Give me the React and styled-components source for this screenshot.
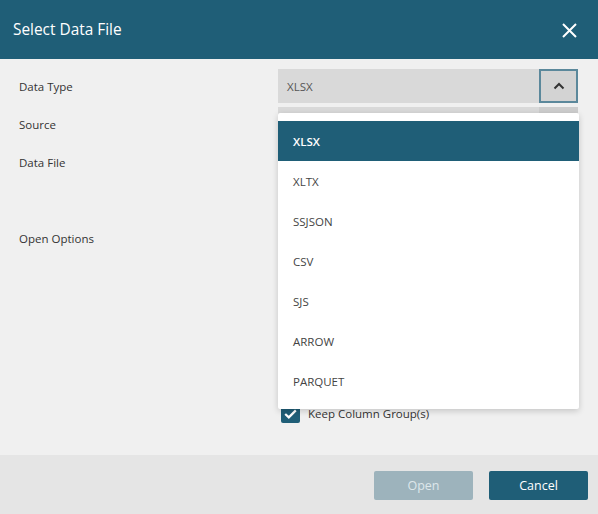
import React from 'react'
import styled, { createGlobalStyle } from 'styled-components'

const GlobalStyle = createGlobalStyle`
    html, body {
        margin: 0;
        padding: 0;
        background: #f0f0f0;
    }
    body {
        font-family: "Segoe UI", "Open Sans", "Noto Sans", sans-serif;
    }
`

const TEAL = '#1f5e77'

const dataTypes = ['XLSX', 'XLTX', 'SSJSON', 'CSV', 'SJS', 'ARROW', 'PARQUET']

function ChevronUp() {
    return (
        <svg width="12" height="8" viewBox="0 0 12 8">
            <path d="M1.5 6.5 L6 2 L10.5 6.5" fill="none" stroke="#333" strokeWidth="2" />
        </svg>
    )
}

function CloseIcon() {
    return (
        <svg width="15" height="15" viewBox="0 0 15 15">
            <path d="M1 1 L14 14 M14 1 L1 14" stroke="#fff" strokeWidth="2" />
        </svg>
    )
}

function CheckMark() {
    return (
        <svg width="13" height="10" viewBox="0 0 13 10">
            <path d="M1.2 5 L4.8 8.4 L11.8 1.4" fill="none" stroke="#fff" strokeWidth="2.2" />
        </svg>
    )
}

function App() {
    return (
        <Dialog>
            <GlobalStyle />
            <Header>
                <Title>Select Data File</Title>
                <CloseButton><CloseIcon /></CloseButton>
            </Header>

            <Body>
                <Row>
                    <Label>Data Type</Label>
                    <Control>
                        <Select>
                            <SelectValue>XLSX</SelectValue>
                            <SelectButton $focused><ChevronUp /></SelectButton>
                        </Select>
                        {/* open list of the data type select, lies over the form */}
                        <Popup>
                            {dataTypes.map((t, i) => (
                                <PopupItem key={t} $selected={i === 0}>{t}</PopupItem>
                            ))}
                        </Popup>
                    </Control>
                </Row>
                <Row>
                    <Label>Source</Label>
                    <Control>
                        <Select>
                            <SelectValue />
                            <SelectButton />
                        </Select>
                    </Control>
                </Row>
                <Row>
                    <Label>Data File</Label>
                    <Control />
                </Row>
                <Row>
                    <Label />
                    <Control />
                </Row>
                <OptionsRow>
                    <Label>Open Options</Label>
                    {/* the upper options are hidden by the open list */}
                    <OptionList>
                        <Option>
                            <CheckBox $checked><CheckMark /></CheckBox>
                            <span>Keep Column Group(s)</span>
                        </Option>
                    </OptionList>
                </OptionsRow>
            </Body>

            <Footer>
                <Button $disabled>Open</Button>
                <Button>Cancel</Button>
            </Footer>
        </Dialog>
    )
}

const Dialog = styled.div`
    width: 598px;
    height: 514px;
    display: flex;
    flex-direction: column;
    background: #f0f0f0;
    overflow: hidden;
`

const Header = styled.div`
    height: 59px;
    flex: none;
    background: ${TEAL};
    display: flex;
    align-items: center;
    justify-content: space-between;
    padding: 0 21px 0 13px;
`

const Title = styled.div`
    color: #fff;
    font-size: 15.4px;
    padding-bottom: 1px;
`

const CloseButton = styled.div`
    display: flex;
    width: 15px;
    height: 15px;
    margin-top: 1px;
`

const Body = styled.div`
    flex: 1;
    display: flex;
    flex-direction: column;
    gap: 4px;
    padding: 10px 20px 0 19px;
`

const Row = styled.div`
    display: flex;
    align-items: center;
    box-sizing: border-box;
    height: 34px;
`

const OptionsRow = styled.div`
    display: flex;
    align-items: flex-start;
    margin-top: 5px;
`

const Label = styled.div`
    width: 259px;
    height: 25px;
    flex: none;
    display: flex;
    align-items: center;
    font-size: 11.5px;
    color: #333;
`

const Control = styled.div`
    position: relative;
    flex: 1;
    align-self: stretch;
`

const Select = styled.div`
    height: 34px;
    background: #d9d9d9;
    display: flex;
    align-items: stretch;
`

const SelectValue = styled.div`
    flex: 1;
    display: flex;
    align-items: center;
    padding-left: 9px;
    font-size: 11.5px;
    color: #555;
`

const SelectButton = styled.div`
    width: 39px;
    box-sizing: border-box;
    display: flex;
    align-items: center;
    justify-content: center;
    background: ${p => (p.$focused ? '#d3d3d3' : '#cdcdcd')};
    border: 2px solid ${p => (p.$focused ? '#5b889b' : 'transparent')};
`

const Popup = styled.div`
    position: absolute;
    top: 44px;
    left: 0;
    width: 301px;
    padding: 8px 0;
    background: #fff;
    border-radius: 2px;
    box-shadow: 0 2px 6px rgba(0, 0, 0, 0.18);
    z-index: 10;
`

const PopupItem = styled.div`
    height: 40px;
    display: flex;
    align-items: center;
    padding-left: 15px;
    font-size: 11.5px;
    color: ${p => (p.$selected ? '#fff' : '#444')};
    font-weight: ${p => (p.$selected ? 600 : 400)};
    background: ${p => (p.$selected ? TEAL : 'transparent')};
`

const OptionList = styled.div`
    display: flex;
    flex-direction: column;
    padding: 175px 0 0 3px;
`

const Option = styled.div`
    display: flex;
    align-items: center;
    gap: 8px;
    height: 25px;
    font-size: 11.5px;
    color: #333;
`

const CheckBox = styled.div`
    width: 19px;
    height: 18px;
    flex: none;
    border-radius: 2px;
    box-sizing: border-box;
    display: flex;
    align-items: center;
    justify-content: center;
    background: ${p => (p.$checked ? TEAL : '#fff')};
    border: ${p => (p.$checked ? 'none' : '1px solid #888')};
`

const Footer = styled.div`
    height: 59px;
    flex: none;
    box-sizing: border-box;
    background: #e5e5e5;
    display: flex;
    align-items: center;
    justify-content: flex-end;
    gap: 16px;
    padding: 1px 10px 0 0;
`

const Button = styled.div`
    width: 99px;
    height: 29px;
    border-radius: 2px;
    display: flex;
    align-items: center;
    justify-content: center;
    font-size: 12.5px;
    background: ${p => (p.$disabled ? '#9db3bc' : TEAL)};
    color: ${p => (p.$disabled ? '#dde7eb' : '#fff')};
`

export default App
